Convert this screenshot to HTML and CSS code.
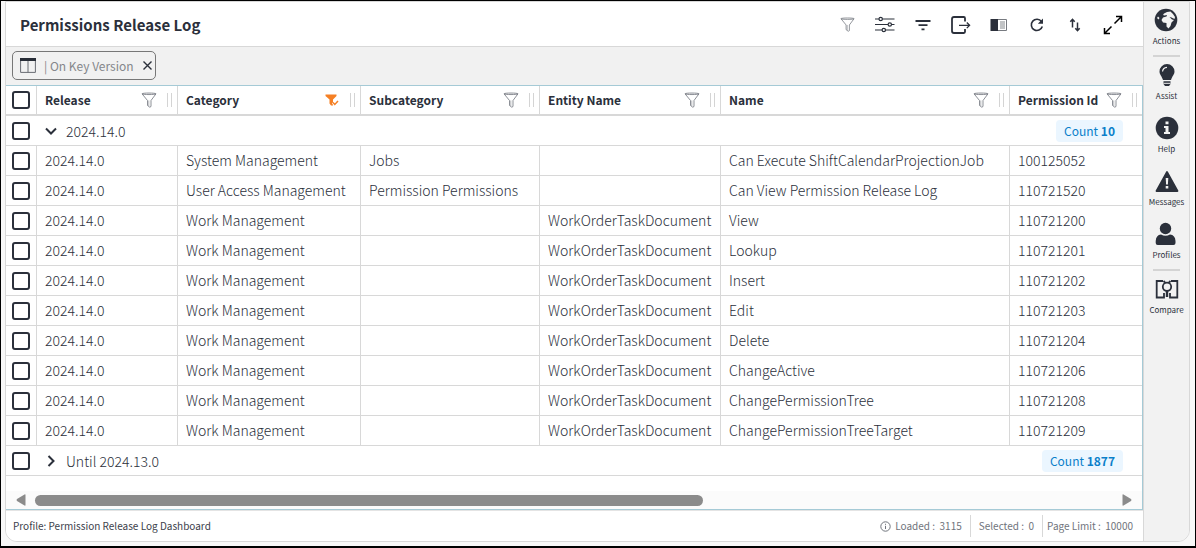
FILE: index.html
```html
<!DOCTYPE html>
<html lang="en">
<head>
<meta charset="utf-8">
<title>Permissions Release Log</title>
<link rel="stylesheet" href="styles.css">
</head>
<body>
<svg class="defs" width="0" height="0" aria-hidden="true">
  <symbol id="funnel" viewBox="0 0 16 16"><path d="M1 1.800C1 .8 15 .8 15 1.800L10 8.500V14.500L8.800 15.200L6.500 13.500V8.500Z M1 1.800C1 2.800 15 2.800 15 1.800" fill="none" stroke="currentColor" stroke-width=".8" stroke-linejoin="round"/><path d="M7.800 8.500V14" stroke="currentColor" stroke-width=".5"/></symbol>
  <symbol id="funnel-on" viewBox="0 0 14 12"><path d="M.5.500H11.500V2L8 5.500V11.500H6L4.500 9.500V5.500L.5 2Z" fill="currentColor"/><path d="M8 8.500L9.800 10.500L13 7" fill="none" stroke="#fff" stroke-width="3"/><path d="M8 8.500L9.800 10.500L13 7" fill="none" stroke="currentColor" stroke-width="1.500"/></symbol>
</svg>
<div class="app">
  <main class="panel">
    <header class="bar">
      <h1 class="title">Permissions Release Log</h1>
      <div class="tools">
        <button class="tool tool-soft" aria-label="Filter"><svg width="15" height="15"><use href="#funnel"/></svg></button>
        <button class="tool" aria-label="Settings"><svg width="20" height="18" viewBox="0 0 20 18" fill="none" stroke="currentColor" stroke-width="1.200"><path d="M0 3H4M7.500 3H19.500M0 8.500H13M16.500 8.500H19.500M0 14H7M10.500 14H19.500"/><circle cx="5.700" cy="3" r="1.700"/><circle cx="14.800" cy="8.500" r="1.700"/><circle cx="8.800" cy="14" r="1.700"/></svg></button>
        <button class="tool" aria-label="Sort list"><svg width="16" height="12" viewBox="0 0 16 12" stroke="currentColor" stroke-width="1.800"><path d="M.5 2H15.500M3.500 6.200H12.500M6.500 10.400H9.500"/></svg></button>
        <button class="tool" aria-label="Export"><svg width="20" height="18" viewBox="0 0 20 18" fill="none" stroke="currentColor" stroke-width="1.800"><path d="M14 5.500V2.200Q14 1 12.800 1H3Q1 1 1 3V15Q1 17 3 17H12.800Q14 17 14 15.800V13"/><path d="M8 9.300H18.500M15.800 6.500L18.600 9.300L15.800 12.100" stroke-width="1.300"/></svg></button>
        <button class="tool" aria-label="Side view"><svg width="18" height="14" viewBox="0 0 18 14"><path d="M.5 1H8V13H.5Z" fill="currentColor"/><path d="M8 1.500H16.500V12.500H8" fill="none" stroke="#777a80"/><path d="M10 4H15M10 6H15M10 8H15M10 10H15" stroke="#777a80" stroke-width=".9"/></svg></button>
        <button class="tool" aria-label="Refresh"><svg width="14" height="14" viewBox="0 0 14 14" fill="none" stroke="currentColor" stroke-width="1.600"><path d="M12.300 8.500A5.600 5.600 0 1 1 11.500 3.600"/><path d="M13 .5V5.800H7.800Z" fill="currentColor" stroke="none"/></svg></button>
        <button class="tool" aria-label="Sort order"><svg width="12" height="14" viewBox="0 0 12 14" fill="none" stroke="currentColor" stroke-width="1.500"><path d="M3.500 9.500V1.300M1.300 3.700L3.500 1.300L5.700 3.700M8.500 4.500V12.700M6.300 10.300L8.500 12.700L10.700 10.300"/></svg></button>
        <button class="tool tool-black" aria-label="Expand"><svg width="20" height="20" viewBox="0 0 20 20" fill="none" stroke="currentColor" stroke-width="1.500"><path d="M13 1.500H18.500V7M18 2L11.500 8.500M7 18.500H1.500V13M2 18L8.500 11.500"/></svg></button>
      </div>
    </header>
    <div class="groups">
      <div class="chip">
        <svg width="16" height="15" viewBox="0 0 16 15" fill="none"><path d="M.6 1V14.400H15.400V1M8 2V14.400" stroke="#686c73"/><path d="M0 0H16V3H0Z" fill="#282d37"/></svg>
        <span class="chip-text">| On Key Version</span>
        <button class="chip-close" aria-label="Remove grouping"><svg width="9" height="9" viewBox="0 0 9 9" stroke="currentColor" stroke-width="1.400"><path d="M.5.500L8.500 8.500M8.500.500L.5 8.500"/></svg></button>
      </div>
    </div>
    <section class="grid">
      <table class="log">
        <colgroup><col class="c-check"><col class="c-release"><col class="c-category"><col class="c-sub"><col class="c-entity"><col><col class="c-id"></colgroup>
        <thead>
          <tr>
            <th class="pick"><input type="checkbox" aria-label="Select all"></th>
            <th><div class="head"><span class="label">Release</span><button class="flt" aria-label="Filter Release"><svg width="16" height="16"><use href="#funnel"/></svg></button><i class="grip"></i></div></th>
            <th><div class="head"><span class="label">Category</span><button class="flt flt-on" aria-label="Filter Category"><svg width="14" height="12"><use href="#funnel-on"/></svg></button><i class="grip"></i></div></th>
            <th><div class="head"><span class="label">Subcategory</span><button class="flt" aria-label="Filter Subcategory"><svg width="16" height="16"><use href="#funnel"/></svg></button><i class="grip"></i></div></th>
            <th><div class="head"><span class="label">Entity Name</span><button class="flt" aria-label="Filter Entity Name"><svg width="16" height="16"><use href="#funnel"/></svg></button><i class="grip"></i></div></th>
            <th><div class="head"><span class="label">Name</span><button class="flt" aria-label="Filter Name"><svg width="16" height="16"><use href="#funnel"/></svg></button><i class="grip"></i></div></th>
            <th><div class="head"><span class="label">Permission Id</span><button class="flt" aria-label="Filter Permission Id"><svg width="16" height="16"><use href="#funnel"/></svg></button><i class="grip"></i></div></th>
          </tr>
        </thead>
        <tbody>
          <tr class="group"><td class="pick"><input type="checkbox" aria-label="Select group 2024.14.0"></td><td colspan="6"><div class="group-row"><button class="toggle" aria-label="Collapse"><svg width="12" height="12" viewBox="0 0 12 12" fill="none" stroke="currentColor" stroke-width="2"><path d="M1 3.500L6 8.500L11 3.500"/></svg></button><span class="label">2024.14.0</span><span class="count">Count <b>10</b></span></div></td></tr>
          <tr><td class="pick"><input type="checkbox" aria-label="Select 100125052"></td><td>2024.14.0</td><td>System Management</td><td>Jobs</td><td></td><td>Can Execute ShiftCalendarProjectionJob</td><td>100125052</td></tr>
          <tr><td class="pick"><input type="checkbox" aria-label="Select 110721520"></td><td>2024.14.0</td><td>User Access Management</td><td>Permission Permissions</td><td></td><td>Can View Permission Release Log</td><td>110721520</td></tr>
          <tr><td class="pick"><input type="checkbox" aria-label="Select 110721200"></td><td>2024.14.0</td><td>Work Management</td><td></td><td>WorkOrderTaskDocument</td><td>View</td><td>110721200</td></tr>
          <tr><td class="pick"><input type="checkbox" aria-label="Select 110721201"></td><td>2024.14.0</td><td>Work Management</td><td></td><td>WorkOrderTaskDocument</td><td>Lookup</td><td>110721201</td></tr>
          <tr><td class="pick"><input type="checkbox" aria-label="Select 110721202"></td><td>2024.14.0</td><td>Work Management</td><td></td><td>WorkOrderTaskDocument</td><td>Insert</td><td>110721202</td></tr>
          <tr><td class="pick"><input type="checkbox" aria-label="Select 110721203"></td><td>2024.14.0</td><td>Work Management</td><td></td><td>WorkOrderTaskDocument</td><td>Edit</td><td>110721203</td></tr>
          <tr><td class="pick"><input type="checkbox" aria-label="Select 110721204"></td><td>2024.14.0</td><td>Work Management</td><td></td><td>WorkOrderTaskDocument</td><td>Delete</td><td>110721204</td></tr>
          <tr><td class="pick"><input type="checkbox" aria-label="Select 110721206"></td><td>2024.14.0</td><td>Work Management</td><td></td><td>WorkOrderTaskDocument</td><td>ChangeActive</td><td>110721206</td></tr>
          <tr><td class="pick"><input type="checkbox" aria-label="Select 110721208"></td><td>2024.14.0</td><td>Work Management</td><td></td><td>WorkOrderTaskDocument</td><td>ChangePermissionTree</td><td>110721208</td></tr>
          <tr><td class="pick"><input type="checkbox" aria-label="Select 110721209"></td><td>2024.14.0</td><td>Work Management</td><td></td><td>WorkOrderTaskDocument</td><td>ChangePermissionTreeTarget</td><td>110721209</td></tr>
          <tr class="group"><td class="pick"><input type="checkbox" aria-label="Select group Until 2024.13.0"></td><td colspan="6"><div class="group-row"><button class="toggle" aria-label="Expand"><svg width="12" height="12" viewBox="0 0 12 12" fill="none" stroke="currentColor" stroke-width="2"><path d="M3.500 1L8.500 6L3.500 11"/></svg></button><span class="label">Until 2024.13.0</span><span class="count">Count <b>1877</b></span></div></td></tr>
        </tbody>
      </table>
      <div class="scroll">
        <svg width="10" height="12" viewBox="0 0 10 12"><path d="M9.500 1V11Q9.500 12 8.500 11.500L1 7Q0 6 1 5L8.500.500Q9.500 0 9.500 1Z" fill="#8b8b8b"/></svg>
        <div class="track"><div class="thumb"></div></div>
        <svg width="10" height="12" viewBox="0 0 10 12"><path d="M.5 1V11Q.5 12 1.500 11.500L9 7Q10 6 9 5L1.500.500Q.5 0 .5 1Z" fill="#8b8b8b"/></svg>
      </div>
    </section>
    <footer class="status">
      <span class="label profile">Profile: Permission Release Log Dashboard</span>
      <span class="stat"><svg width="11" height="11" viewBox="0 0 11 11" fill="none" stroke="currentColor"><circle cx="5.500" cy="5.500" r="4.700"/><path d="M5.500 4.800V8M5.500 2.800V3.800"/></svg>Loaded :&nbsp; 3115</span>
      <span class="stat">Selected :&nbsp; 0</span>
      <span class="stat stat-last">Page Limit :&nbsp; 10000</span>
    </footer>
  </main>
  <nav class="side">
    <button class="act"><svg width="24" height="24" viewBox="0 0 24 24"><circle cx="12" cy="12" r="11.300" fill="currentColor"/><path d="M10 5.500L13 4L16.500 3.500L19 6L21 9L20.500 11L17.500 9.500L15.500 9L18 11.500L20 12L17.500 14.500L16.500 18L14.500 20.500L12.500 18.500L12.500 15L9 14.500L7.500 12L9 9.500L12.500 8.500L13 7L10.500 7.500L9 7Z" fill="#f2f2f2"/><path d="M4 8.500L5.500 10L4.500 11.500L3 10Z" fill="#f2f2f2"/></svg><span>Actions</span></button>
    <hr class="rule">
    <button class="act"><svg width="24" height="24" viewBox="0 0 24 24" fill="currentColor"><path d="M12 1A7.500 7.500 0 0 0 4.500 8.500C4.500 11.500 6.500 12.500 8 17H16C17.500 12.500 19.500 11.500 19.500 8.500A7.500 7.500 0 0 0 12 1ZM8.500 18.300H15.500V21L14 23H10L8.500 21Z"/><path d="M7.500 8.500Q8 4.500 12 4.300" fill="none" stroke="#f2f2f2" stroke-width="1.200"/><path d="M8.500 20.300H15.500" stroke="#f2f2f2"/></svg><span>Assist</span></button>
    <button class="act"><svg width="24" height="24" viewBox="0 0 24 24"><circle cx="12" cy="12" r="11.300" fill="currentColor"/><path d="M10.500 5.500H13.500V8.300H10.500ZM9 10H13.500V16H15V18H9V16H10.500V12H9Z" fill="#f2f2f2"/></svg><span>Help</span></button>
    <button class="act"><svg width="24" height="24" viewBox="0 0 24 24"><path d="M12 3L22.500 22H1.500Z" fill="currentColor" stroke="currentColor" stroke-width="1.800" stroke-linejoin="round"/><path d="M10.700 9H13.300L12.900 15.500H11.100ZM10.700 17H13.300V19.500H10.700Z" fill="#f2f2f2"/></svg><span>Messages</span></button>
    <button class="act"><svg width="24" height="24" viewBox="0 0 24 24" fill="currentColor"><circle cx="10.500" cy="6.500" r="5.700"/><path d="M.7 21V19Q1 13 6 12.500Q10.500 15 15 12.500Q20.200 13 20.500 19V21Q20.500 23 18.500 23H2.700Q.7 23 .7 21Z"/></svg><span>Profiles</span></button>
    <hr class="rule">
    <button class="act"><svg width="24" height="24" viewBox="0 0 24 24" fill="none" stroke="currentColor" stroke-width="1.800"><path d="M8 4H1.700V20.500H9V16M16 4H22.300V20.500H15V16"/><circle cx="12" cy="9.800" r="4.200"/><path d="M12 14V20" stroke-width="2.400"/><path d="M8.500 4L10 5.500M15.500 4L14 5.500"/></svg><span>Compare</span></button>
  </nav>
</div>
</body>
</html>
```
FILE: styles.css
```css
* { box-sizing: border-box; }

body {
  margin: 0;
  font-family: "Noto Sans CJK SC", "Noto Sans", sans-serif;
  font-size: 14px;
  line-height: 20px;
  color: #2b303b;
  background: #f8f8f8;
  border: 1px solid #000;
  border-bottom-width: 2px;
  min-height: 100vh;
}

button {
  display: flex;
  align-items: center;
  justify-content: center;
  padding: 0;
  border: 0;
  background: none;
  color: inherit;
  font: inherit;
}

svg { display: block; flex: none; }
.defs { position: absolute; }

.app {
  display: flex;
  margin: 0 5px 4px 4px;
  border: 1px solid #d8d8d8;
  border-radius: 0 0 12px 12px;
  overflow: hidden;
}

.panel { flex: 1; min-width: 0; background: #fff; }

.bar {
  display: flex;
  align-items: center;
  height: 45px;
  padding: 1px 18px 0 14px;
  border-bottom: 1px solid #d8d8d8;
}

.title { flex: 1; margin: 0; font-size: 15px; line-height: 24px; font-weight: 700; }
.tools { display: flex; gap: 14px; }
.tool { width: 24px; height: 24px; }
.tool-soft { color: #70747c; }
.tool-black { color: #000; }

.groups { padding: 4px 6px 5px; background: #f1f1f1; }

.chip {
  display: inline-flex;
  align-items: center;
  height: 29px;
  padding: 0 2px 0 7px;
  border: 1px solid #777;
  border-radius: 5px;
  vertical-align: top;
}

.chip-text { margin: 0 9px 0 8px; font-size: 12px; color: #85878b; }
.chip-close { width: 10px; height: 16px; }

.grid { border: 1px solid #a5cad6; border-left: 0; }

.log {
  width: 100%;
  table-layout: fixed;
  border-collapse: separate;
  border-spacing: 0;
}

.c-check { width: 31px; }
.c-release { width: 141px; }
.c-category { width: 183px; }
.c-sub { width: 179px; }
.c-entity { width: 181px; }
.c-id { width: 132px; }

.log th, .log td {
  height: 30px;
  padding: 0 0 0 8px;
  border-right: 1px solid #d8d8d8;
  border-bottom: 1px solid #d8d8d8;
  text-align: left;
  white-space: nowrap;
}

.log td { padding-bottom: 1px; font-weight: 300; }
.log th { border-bottom-width: 2px; font-size: 12px; }
.log th:last-child, .log td:last-child, .log .group td { border-right: 0; }
.log .pick { padding: 0 0 0 6px; }
.log .group td { padding-left: 7px; padding-bottom: 0; }
.log .group .pick { padding-left: 6px; }

.pick input {
  appearance: none;
  display: block;
  width: 18px;
  height: 18px;
  margin: 0;
  border: 2px solid #2b303b;
  border-radius: 3px;
  background: #fff;
}

.head, .group-row, .scroll, .status { display: flex; align-items: center; }
.label { flex: 1; }
.flt { width: 18px; height: 18px; color: #70747c; }
.flt-on { color: #f58025; }

.grip {
  width: 5px;
  height: 14px;
  margin: 0 5px 0 9px;
  border: solid #d4d4d4;
  border-width: 0 1px;
}

.toggle { width: 14px; height: 14px; margin-right: 8px; }

.count {
  height: 22px;
  margin-right: 19px;
  padding: 0 8px;
  border-radius: 4px;
  background: #ebf6ff;
  color: #0a7fca;
  font-size: 12px;
  font-weight: 400;
  line-height: 22px;
}

.scroll {
  height: 18px;
  margin-top: 15px;
  padding: 0 10px;
  gap: 9px;
  background: #fbfbfb;
}

.track { flex: 1; }
.thumb { width: 62%; height: 11px; border-radius: 6px; background: #8b8b8b; }

.status { height: 31px; padding: 0 10px 0 7px; font-size: 10px; color: #70747c; border-top: 1px solid #e4e4e4; }
.profile { color: #3c414b; }

.stat {
  display: flex;
  align-items: center;
  gap: 4px;
  height: 22px;
  padding: 0 8px;
  border-right: 1px solid #d8d8d8;
}

.stat-last { padding: 0 0 0 4px; border-right: 0; }

.side {
  display: flex;
  flex-direction: column;
  align-items: center;
  width: 46px;
  padding-top: 6px;
  border-left: 1px solid #d8d8d8;
  background: #f2f2f2;
}

.act {
  flex-direction: column;
  gap: 2px;
  margin-bottom: 13px;
  font-size: 8px;
  line-height: 14px;
}

.rule { width: 27px; height: 2px; margin: -6px 0 6px; border: 0; background: #d4d4d4; }
```
